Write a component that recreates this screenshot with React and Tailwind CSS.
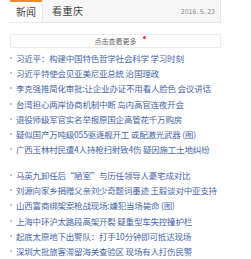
import React from "react";

const GROUP_ONE = [
  "习近平：构建中国特色哲学社会科学  学习时刻",
  "习近平特使会见亚美尼亚总统  治国理政",
  "李克强推简化审批:让企业办证不用看人脸色  会议讲话",
  "台湾担心两岸协商机制中断  岛内高官连夜开会",
  "退役师级军官实名举报原国企高管花千万购房",
  "疑似国产万吨级055驱逐舰开工  或配激光武器 (图)",
  "广西玉林村民遭4人持枪扫射致4伤  疑因施工土地纠纷",
];

const GROUP_TWO = [
  "马英九卸任后“陋室”与历任领导人豪宅成对比",
  "刘源向家乡捐赠父亲刘少奇题词墨迹  王毅谈对中亚支持",
  "山西富商绑架案枪战现场:嫌犯当场毙命 (图)",
  "上海中环沪太路段高架开裂  疑重型车失控撞护栏",
  "起底太原地下出警队：打手10分钟即可抵达现场",
  "深圳大批旅客滞留海关查验区  现场有人打伤民警",
];

const NewsList = ({ items }) => (
  <ul className="flex flex-col">
    {items.map((t) => (
      <li key={t} className="flex items-center h-[15.3px] whitespace-nowrap">
        <span className="w-[2px] h-[2px] bg-[#c4c4c4] mr-[4px] shrink-0" />
        <span className="text-[8.5px] leading-[10px] tracking-[-0.2px] text-[#4766a6]">{t}</span>
      </li>
    ))}
  </ul>
);

export default function App() {
  return (
    <div
      className="w-[251px] h-[259px] bg-white overflow-hidden"
      style={{ fontFamily: '"Noto Sans CJK SC", "Noto Sans", sans-serif' }}
    >
      <div className="pl-[10px] w-[221px]">
        {/* Tabs */}
        <div className="flex h-[23px] border border-t-0 border-[#e6e6e6] bg-[#f6f6f6]">
          <div className="w-[32px] bg-white border-t-2 border-[#f08a24] flex items-center justify-center text-[10px] leading-[12px] text-[#444] -ml-px">
            新闻
          </div>
          <div className="flex-1 flex items-center justify-between pl-[9px] pr-[5px] border-l border-[#e6e6e6]">
            <span className="text-[10px] leading-[12px] text-[#444] tracking-[0.5px]">看重庆</span>
            <span className="text-[7px] leading-[9px] text-[#888]">2016. 5. 23</span>
          </div>
        </div>

        {/* More button */}
        <div className="mt-[11px] h-[14px] border border-[#ececec] bg-[#fdfdfd] flex items-center justify-center relative">
          <span className="text-[7px] leading-[9px] text-[#666]">点击查看更多</span>
          <span className="absolute left-[132px] top-[1px] w-[3px] h-[3px] rounded-full bg-[#e0303a]" />
        </div>

        <div className="mt-[2px]">
          <NewsList items={GROUP_ONE} />
        </div>
        <div className="mt-[10px]">
          <NewsList items={GROUP_TWO} />
        </div>
      </div>
    </div>
  );
}
